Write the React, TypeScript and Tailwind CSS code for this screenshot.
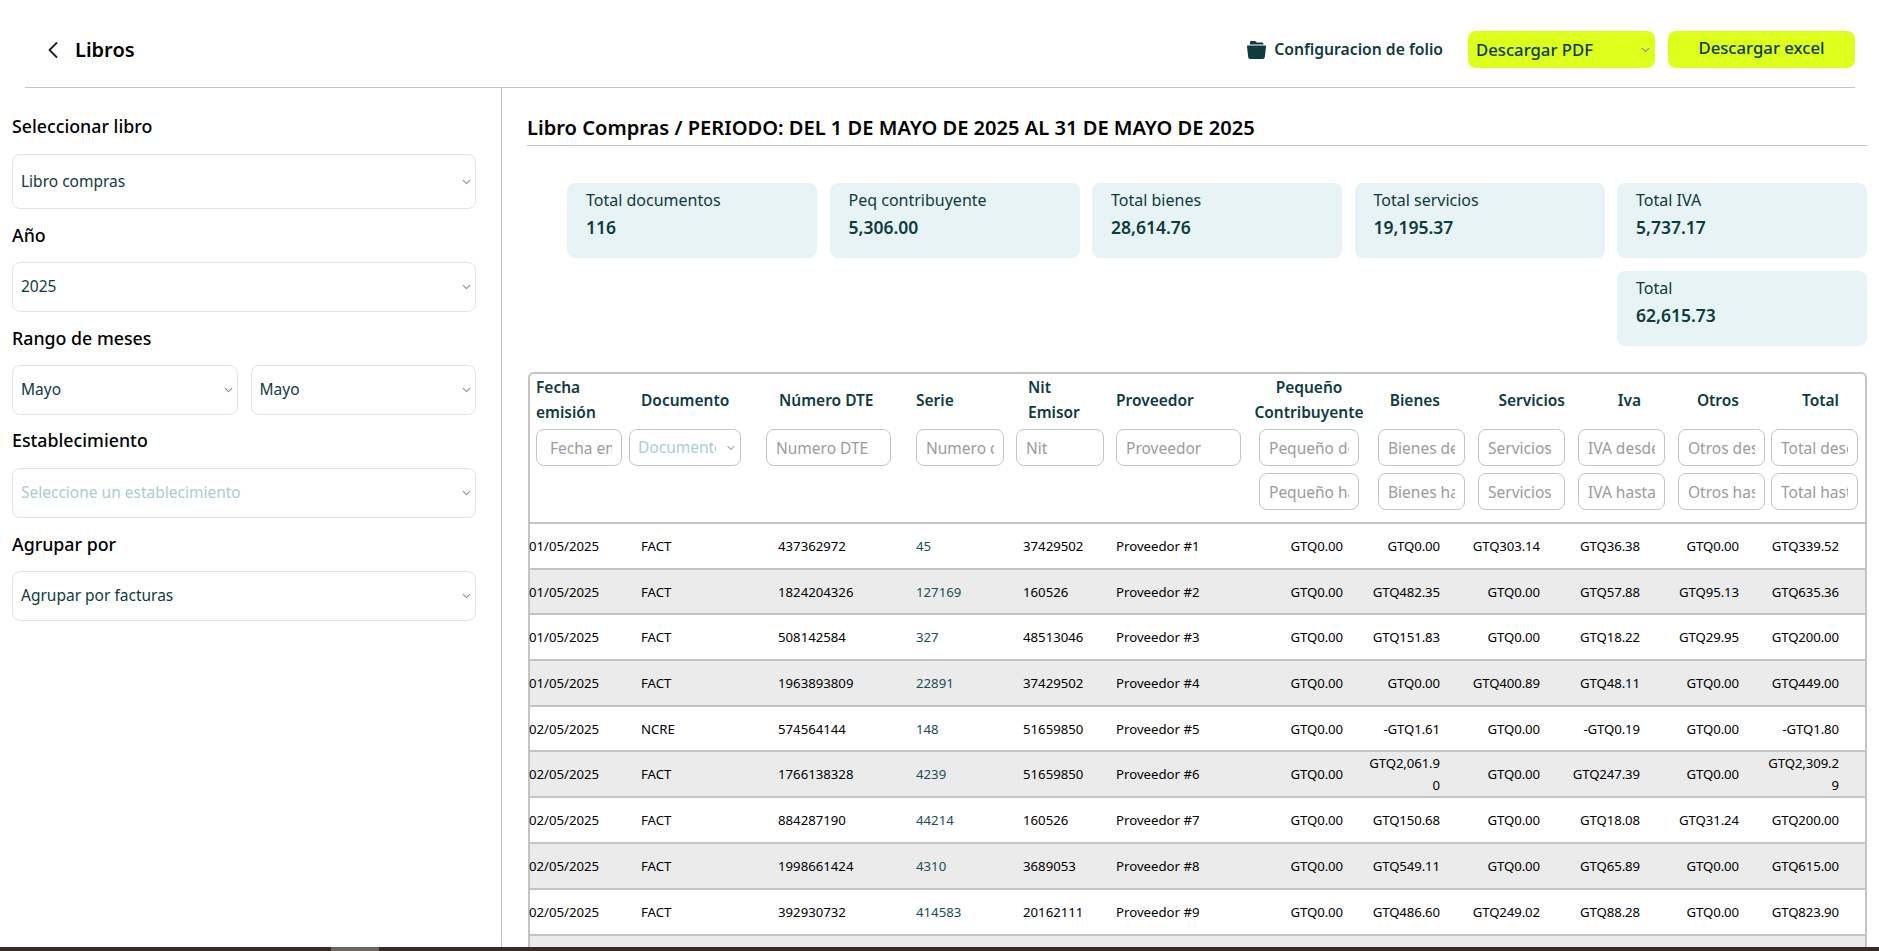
import { ChevronDown, ChevronLeft } from "lucide-react";

const rows = [
  ["01/05/2025", "FACT", "437362972", "45", "37429502", "Proveedor #1", "GTQ0.00", "GTQ0.00", "GTQ303.14", "GTQ36.38", "GTQ0.00", "GTQ339.52"],
  ["01/05/2025", "FACT", "1824204326", "127169", "160526", "Proveedor #2", "GTQ0.00", "GTQ482.35", "GTQ0.00", "GTQ57.88", "GTQ95.13", "GTQ635.36"],
  ["01/05/2025", "FACT", "508142584", "327", "48513046", "Proveedor #3", "GTQ0.00", "GTQ151.83", "GTQ0.00", "GTQ18.22", "GTQ29.95", "GTQ200.00"],
  ["01/05/2025", "FACT", "1963893809", "22891", "37429502", "Proveedor #4", "GTQ0.00", "GTQ0.00", "GTQ400.89", "GTQ48.11", "GTQ0.00", "GTQ449.00"],
  ["02/05/2025", "NCRE", "574564144", "148", "51659850", "Proveedor #5", "GTQ0.00", "-GTQ1.61", "GTQ0.00", "-GTQ0.19", "GTQ0.00", "-GTQ1.80"],
  ["02/05/2025", "FACT", "1766138328", "4239", "51659850", "Proveedor #6", "GTQ0.00", "GTQ2,061.90", "GTQ0.00", "GTQ247.39", "GTQ0.00", "GTQ2,309.29"],
  ["02/05/2025", "FACT", "884287190", "44214", "160526", "Proveedor #7", "GTQ0.00", "GTQ150.68", "GTQ0.00", "GTQ18.08", "GTQ31.24", "GTQ200.00"],
  ["02/05/2025", "FACT", "1998661424", "4310", "3689053", "Proveedor #8", "GTQ0.00", "GTQ549.11", "GTQ0.00", "GTQ65.89", "GTQ0.00", "GTQ615.00"],
  ["02/05/2025", "FACT", "392930732", "414583", "20162111", "Proveedor #9", "GTQ0.00", "GTQ486.60", "GTQ249.02", "GTQ88.28", "GTQ0.00", "GTQ823.90"],
];

const colWidths = ["w-[99px]", "w-[137px]", "w-[150px]", "w-[100px]", "w-[100px]", "w-[143px]", "w-[109px]", "w-[104px]", "w-[100px]", "w-[100px]", "w-[96px]", "w-[97px]"];

const money = "tracking-[-0.1px] text-right ";
const cellPad = [
  "pl-[0px] text-left [text-indent:-1px]",
  "pl-[12px] text-left",
  "pl-[12px] text-left",
  "pl-0 text-left text-[#17505a]",
  "pl-[7px] text-left",
  "pl-0 text-left",
  money + "pr-[25px]",
  money + "pl-[1px] pr-[32px]",
  money + "pl-0 pr-[32px]",
  money + "pl-0 pr-[32px]",
  money + "pl-[2px] pr-[29px]",
  money + "pl-0 pr-[26px]",
];

const titles = [
  { t: ["Fecha", "emisión"], c: "pl-[6px] text-left", inner: "" },
  { t: ["Documento"], c: "pl-[12px] text-left", inner: "" },
  { t: ["Número DTE"], c: "pl-[13px] text-left", inner: "" },
  { t: ["Serie"], c: "pl-0 text-left", inner: "" },
  { t: ["Nit", "Emisor"], c: "pl-[12px] text-left", inner: "" },
  { t: ["Proveedor"], c: "pl-0 text-left", inner: "" },
  { t: ["Pequeño", "Contribuyente"], c: "text-center", inner: "-ml-[6px] w-[112px]" },
  { t: ["Bienes"], c: "pr-[32px] text-right", inner: "" },
  { t: ["Servicios"], c: "pr-[7px] text-right", inner: "" },
  { t: ["Iva"], c: "pr-[31px] text-right", inner: "" },
  { t: ["Otros"], c: "pr-[29px] text-right", inner: "" },
  { t: ["Total"], c: "pr-[26px] text-right", inner: "" },
];

const inputCls = "h-[37px] w-full rounded-lg border border-[#c4c4c4] bg-white pr-[9px] text-[15.5px] outline-none placeholder:text-[#9b9b9b]";
const padStd = " pl-[9px]";

function Sel({ value, muted, className }: { value: string; muted?: boolean; className?: string }) {
  return (
    <div className={"relative " + (className ?? "")}>
      <select
        defaultValue={value}
        className={
          "h-full w-full appearance-none rounded-lg border border-[#dfe5e5] bg-white pl-[8px] pr-6 text-[15.5px] outline-none " +
          (muted ? "text-[#a9cdd2]" : "text-[#0e3b43]")
        }
      >
        <option>{value}</option>
      </select>
      <ChevronDown size={13} strokeWidth={2.2} className="pointer-events-none absolute right-[3px] top-1/2 -translate-y-1/2 text-[#8b9698]" />
    </div>
  );
}

function Card({ label, value, className }: { label: string; value: string; className?: string }) {
  return (
    <div className={"h-[75px] rounded-lg bg-[#e7f3f4] pl-[19px] pt-[4px] text-[#0e3b3f] " + (className ?? "")}>
      <div className="text-[16px] leading-[27px]">{label}</div>
      <div className="text-[17.5px] font-semibold leading-[27px]">{value}</div>
    </div>
  );
}

export default function App() {
  return (
    <div className="flex h-[951px] w-[1879px] flex-col overflow-hidden bg-white font-['Noto_Sans',sans-serif] text-black">
      <header className="ml-[25px] mr-[24px] flex h-[88px] shrink-0 items-center border-b border-[#c4c4c4] pt-[12px]">
        <ChevronLeft size={28} strokeWidth={1.6} className="ml-[14px] text-[#222]" />
        <h1 className="ml-[8px] text-[20px] font-semibold">Libros</h1>
        <div className="ml-auto flex items-center">
          <svg width="21" height="20" viewBox="0 0 21 20" className="mr-[7px] text-[#0e3b3f]" fill="currentColor">
            <path d="M4 2.4 C4.2 1.4 4.8 1 5.6 1 H8.6 C9.2 1 9.6 1.3 10 1.8 L10.6 2.6 H16 C16.8 2.6 17.2 3 17.4 3.8 L17.5 4.6 H3.7 Z" />
            <path d="M1 6.6 C1 6 1.4 5.6 2 5.6 H19 C19.6 5.6 20 6 20 6.6 L18.8 17 C18.7 18.2 18 19 16.8 19 H4.2 C3 19 2.3 18.2 2.2 17 Z" />
          </svg>
          <span className="text-[15.7px] font-semibold text-[#0e3b3f]">Configuracion de folio</span>
          <div className="relative ml-[25px] h-[37px] w-[187px]">
            <select defaultValue="Descargar PDF" className="h-full w-full appearance-none rounded-lg bg-[#dcff1c] pl-[8px] pr-6 text-[16.7px] font-medium text-[#0e3b3f] outline-none">
              <option>Descargar PDF</option>
            </select>
            <ChevronDown size={13} strokeWidth={2.2} className="pointer-events-none absolute right-[3px] top-1/2 -translate-y-1/2 text-[#8b9698]" />
          </div>
          <button className="ml-[13px] h-[37px] w-[187px] rounded-lg bg-[#dcff1c] pb-[3px] text-[16.7px] font-medium text-[#0e3b3f]">Descargar excel</button>
        </div>
      </header>

      <div className="flex min-h-0 flex-1">
        <aside className="w-[502px] shrink-0 border-r border-[#c4c4c4] pl-[12px] pr-[25px] pt-[25px]">
          <div className="text-[17.8px] font-medium leading-[26px]">Seleccionar libro</div>
          <Sel value="Libro compras" className="mt-[15px] h-[55px]" />
          <div className="mt-[13px] text-[17.8px] font-medium leading-[26px]">Año</div>
          <Sel value="2025" className="mt-[14px] h-[50px]" />
          <div className="mt-[13px] text-[17.8px] font-medium leading-[26px]">Rango de meses</div>
          <div className="mt-[14px] flex gap-[13px]">
            <Sel value="Mayo" className="h-[50px] flex-1" />
            <Sel value="Mayo" className="h-[50px] flex-1" />
          </div>
          <div className="mt-[12px] text-[17.8px] font-medium leading-[26px]">Establecimiento</div>
          <Sel value="Seleccione un establecimiento" muted className="mt-[15px] h-[50px]" />
          <div className="mt-[13px] text-[17.8px] font-medium leading-[26px]">Agrupar por</div>
          <Sel value="Agrupar por facturas" className="mt-[14px] h-[50px]" />
        </aside>

        <main className="min-w-0 flex-1 pl-[25px] pr-[12px]">
          <h2 className="flex h-[58px] items-end border-b border-[#c4c4c4] pb-[2px] text-[20.1px] font-semibold">
            Libro Compras / PERIODO: DEL 1 DE MAYO DE 2025 AL 31 DE MAYO DE 2025
          </h2>
          <div className="ml-[40px] mt-[37px] grid grid-cols-5 gap-x-[12.5px] gap-y-[13px]">
            <Card label="Total documentos" value="116" />
            <Card label="Peq contribuyente" value="5,306.00" />
            <Card label="Total bienes" value="28,614.76" />
            <Card label="Total servicios" value="19,195.37" />
            <Card label="Total IVA" value="5,737.17" />
            <Card label="Total" value="62,615.73" className="col-start-5" />
          </div>

          <div className="ml-px mt-[26px] w-[1339px] rounded-t-md border-x-2 border-t-2 border-[#c4c4c4]">
            <table className="w-[1335px] table-fixed">
              <colgroup>
                {colWidths.map((w, i) => (
                  <col key={i} className={w} />
                ))}
              </colgroup>
              <thead className="text-[15.5px] font-semibold text-[#0e3b3f]">
                <tr className="h-[55px]">
                  {titles.map((h, i) => (
                    <th key={i} className={"whitespace-nowrap pb-[3px] font-semibold leading-[25px] " + h.c}>
                      <div className={h.inner}>
                        {h.t.map((l) => (
                          <div key={l}>{l}</div>
                        ))}
                      </div>
                    </th>
                  ))}
                </tr>
                <tr className="h-[44px] align-top font-normal">
                  <th className="pl-[6px] pr-[7px] font-normal"><input placeholder="Fecha emisión" className={inputCls + " pl-[13px]"} /></th>
                  <th className="pr-[25px] font-normal">
                    <div className="relative h-[37px]">
                      <select defaultValue="Documento" className="h-full w-full appearance-none rounded-lg border border-[#c4c4c4] bg-white pl-[8px] pr-[24px] text-[15.5px] font-normal text-[#a9cdd2] outline-none">
                        <option>Documento</option>
                      </select>
                      <ChevronDown size={12} className="pointer-events-none absolute right-[4px] top-1/2 -translate-y-1/2 bg-white text-[#6f7b7d]" />
                    </div>
                  </th>
                  <th className="pr-[25px] font-normal"><input placeholder="Numero DTE" className={inputCls + padStd} /></th>
                  <th className="pr-[12px] font-normal"><input placeholder="Numero de serie" className={inputCls + padStd} /></th>
                  <th className="pr-[12px] font-normal"><input placeholder="Nit" className={inputCls + padStd} /></th>
                  <th className="pr-[18px] font-normal"><input placeholder="Proveedor" className={inputCls + padStd} /></th>
                  <th className="pr-[9px] font-normal"><input placeholder="Pequeño desde" className={inputCls + padStd} /></th>
                  <th className="pl-[10px] pr-[7px] font-normal"><input placeholder="Bienes desde" className={inputCls + padStd} /></th>
                  <th className="pl-[6px] pr-[7px] font-normal"><input placeholder="Servicios desde" className={inputCls + padStd} /></th>
                  <th className="pl-[6px] pr-[7px] font-normal"><input placeholder="IVA desde" className={inputCls + padStd} /></th>
                  <th className="pl-[6px] pr-[3px] font-normal"><input placeholder="Otros desde" className={inputCls + padStd} /></th>
                  <th className="pl-[3px] pr-[7px] font-normal"><input placeholder="Total desde" className={inputCls + padStd} /></th>
                </tr>
                <tr className="h-[50px] border-b-2 border-[#c4c4c4] align-top">
                  <th colSpan={6} />
                  <th className="pr-[9px] font-normal"><input placeholder="Pequeño hasta" className={inputCls + padStd} /></th>
                  <th className="pl-[10px] pr-[7px] font-normal"><input placeholder="Bienes hasta" className={inputCls + padStd} /></th>
                  <th className="pl-[6px] pr-[7px] font-normal"><input placeholder="Servicios hasta" className={inputCls + padStd} /></th>
                  <th className="pl-[6px] pr-[7px] font-normal"><input placeholder="IVA hasta" className={inputCls + padStd} /></th>
                  <th className="pl-[6px] pr-[3px] font-normal"><input placeholder="Otros hasta" className={inputCls + padStd} /></th>
                  <th className="pl-[3px] pr-[7px] font-normal"><input placeholder="Total hasta" className={inputCls + padStd} /></th>
                </tr>
              </thead>
              <tbody className="text-[13.2px] leading-[22px]">
                {rows.map((r, ri) => (
                  <tr key={ri} className={"h-[45.7px] border-b-2 border-[#c4c4c4] " + (ri % 2 === 1 ? "bg-[#ebebeb]" : "bg-white")}>
                    {r.map((v, ci) => (
                      <td key={ci} className={"[overflow-wrap:anywhere] " + cellPad[ci]}>
                        {v}
                      </td>
                    ))}
                  </tr>
                ))}
                <tr className="h-[45.7px] bg-[#ebebeb]">
                  <td colSpan={12} />
                </tr>
              </tbody>
            </table>
          </div>
        </main>
      </div>

      <div className="flex h-[4px] shrink-0 bg-[#3a2a22]">
        <div className="ml-[331px] w-[48px] bg-[#6b655c]" />
      </div>
    </div>
  );
}
